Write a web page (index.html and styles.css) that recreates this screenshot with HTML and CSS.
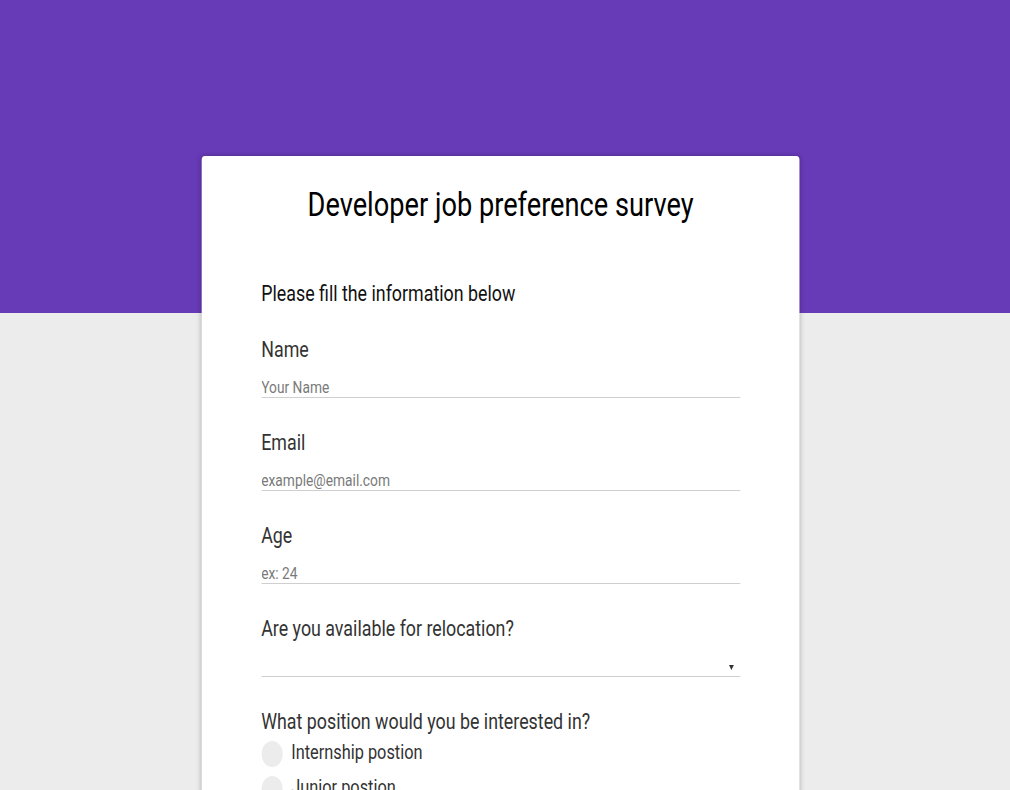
FILE: index.html
```html
<!DOCTYPE html>
<html lang="en">
<head>
<meta charset="utf-8">
<title>Developer job preference survey</title>
<link rel="stylesheet" href="styles.css">
</head>
<body>
<div class="page">
  <main class="card">
    <h1 class="title">Developer job preference survey</h1>
    <p class="intro">Please fill the information below</p>
    <form class="form">
      <div class="field">
        <label class="label" for="name">Name</label>
        <input class="input" id="name" type="text" placeholder="Your Name">
      </div>
      <div class="field">
        <label class="label" for="email">Email</label>
        <input class="input" id="email" type="email" placeholder="example@email.com">
      </div>
      <div class="field">
        <label class="label" for="age">Age</label>
        <input class="input" id="age" type="number" placeholder="ex: 24">
      </div>
      <div class="field">
        <label class="label" for="reloc">Are you available for relocation?</label>
        <div class="select-wrap">
          <select class="select" id="reloc">
            <option value=""></option>
            <option value="yes">Yes</option>
            <option value="no">No</option>
          </select>
        </div>
      </div>
      <div class="field">
        <p class="label">What position would you be interested in?</p>
        <div class="radios">
          <label class="radio-row"><input class="radio" type="radio" name="pos"><span class="radio-text">Internship postion</span></label>
          <label class="radio-row"><input class="radio" type="radio" name="pos"><span class="radio-text">Junior postion</span></label>
          <label class="radio-row"><input class="radio" type="radio" name="pos"><span class="radio-text">Senior postion</span></label>
        </div>
      </div>
      <div class="field">
        <label class="label" for="comments">Any comments?</label>
        <textarea class="input area" id="comments" placeholder="Enter your comment here"></textarea>
      </div>
      <button class="submit" type="submit">Submit</button>
    </form>
  </main>
</div>
</body>
</html>
```
FILE: styles.css
```css
html {
  scrollbar-width: none;
  background: linear-gradient(to bottom, #673ab7 0, #673ab7 313px, #ececec 313px, #ececec 100%);
  min-height: 100%;
}
body {
  margin: 0;
  font-family: Roboto, "Noto Sans", sans-serif;
  color: #333;
}
.page {
  width: 1235px;
  padding-top: 156px;
  transform: scaleX(0.81);
  transform-origin: 0 0;
}
.card {
  width: 738px;
  box-sizing: border-box;
  margin: 0 auto;
  padding: 29px 73px 60px 74px;
  background: #fff;
  border-radius: 4px;
  box-shadow: 0 0 6px rgba(0, 0, 0, 0.25);
}
.title {
  margin: 0 0 57px;
  font-size: 33.6px;
  line-height: 40px;
  font-weight: 400;
  text-align: center;
  color: #000;
}
.intro {
  margin: 0;
  font-size: 22px;
  line-height: 24px;
  color: #111;
}
.form {
  display: flex;
  flex-direction: column;
  gap: 32px;
  margin-top: 31px;
}
.field {
  display: flex;
  flex-direction: column;
  gap: 8px;
}
.label {
  margin: 0;
  font-size: 22px;
  line-height: 26px;
  color: #333;
}
.input,
.select {
  display: block;
  width: 100%;
  box-sizing: content-box;
  height: 20px;
  padding: 6px 0 0;
  margin: 0;
  border: none;
  border-bottom: 1px solid #cfcfcf;
  background: transparent;
  font-family: Roboto, sans-serif;
  font-size: 17px;
  color: #333;
  outline: none;
}
.input::placeholder {
  color: #7a7a7a;
}
.select-wrap {
  position: relative;
}
.select {
  appearance: none;
  -webkit-appearance: none;
  border-radius: 0;
}
.select-wrap::after {
  content: "";
  position: absolute;
  right: 8px;
  top: 15px;
  border-left: 3.5px solid transparent;
  border-right: 3.5px solid transparent;
  border-top: 5px solid #333;
  pointer-events: none;
}
.radios {
  display: flex;
  flex-direction: column;
  gap: 9px;
  margin-top: -2px;
}
.radio-row {
  display: flex;
  align-items: flex-start;
  gap: 11px;
}
.radio {
  appearance: none;
  -webkit-appearance: none;
  width: 26px;
  height: 26px;
  margin: 0;
  border-radius: 50%;
  background: #ececec;
  flex: none;
}
.radio:checked {
  background: #673ab7;
}
.radio-text {
  font-size: 20.2px;
  line-height: 22px;
  color: #333;
}
.area {
  height: 80px;
  resize: none;
}
.submit {
  align-self: center;
  padding: 10px 40px;
  border: none;
  border-radius: 3px;
  background: #673ab7;
  color: #fff;
  font-family: Roboto, sans-serif;
  font-size: 18px;
}
```
